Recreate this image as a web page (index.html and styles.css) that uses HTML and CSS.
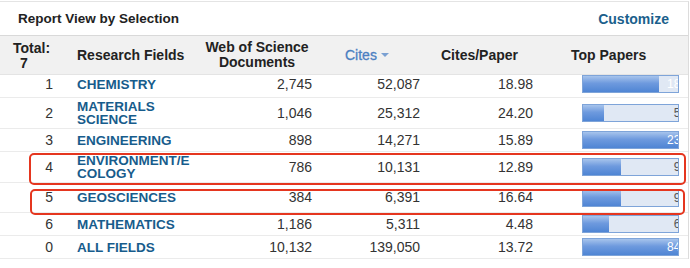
FILE: index.html
```html
<!DOCTYPE html>
<html lang="en">
<head>
  <meta charset="UTF-8" />
  <title>Report View by Selection</title>
  <link rel="stylesheet" href="styles.css">
</head>
<body>
  <div class="panel">
    <div class="panel-head">
      <span class="title">Report View by Selection</span>
      <a href="#" class="customize">Customize</a>
    </div>

    <table class="report">
      <colgroup>
        <col class="c-rank">
        <col class="c-field">
        <col class="c-docs">
        <col class="c-cites">
        <col class="c-cpp">
        <col class="c-top">
      </colgroup>
      <thead>
        <tr>
          <th class="th-total">Total:<br><span class="total-num">7</span></th>
          <th class="th-field">Research Fields</th>
          <th class="th-docs">Web of Science<br>Documents</th>
          <th class="th-cites"><span class="sorted">Cites <span class="caret"></span></span></th>
          <th class="th-cpp">Cites/Paper</th>
          <th class="th-top">Top Papers</th>
        </tr>
      </thead>
      <tbody>
        <tr class="first">
          <td class="rank">1</td>
          <td class="field"><a href="#">CHEMISTRY</a></td>
          <td class="num docs">2,745</td>
          <td class="num cites">52,087</td>
          <td class="num cpp">18.98</td>
          <td class="top"><div class="bar"><div class="fill" style="width: 80%"></div><span class="label">189</span></div></td>
        </tr>
        <tr>
          <td class="rank">2</td>
          <td class="field"><a href="#">MATERIALS<br>SCIENCE</a></td>
          <td class="num docs">1,046</td>
          <td class="num cites">25,312</td>
          <td class="num cpp">24.20</td>
          <td class="top"><div class="bar"><div class="fill" style="width: 22%"></div><span class="label dim">53</span></div></td>
        </tr>
        <tr>
          <td class="rank">3</td>
          <td class="field"><a href="#">ENGINEERING</a></td>
          <td class="num docs">898</td>
          <td class="num cites">14,271</td>
          <td class="num cpp">15.89</td>
          <td class="top"><div class="bar"><div class="fill" style="width: 100%"></div><span class="label">236</span></div></td>
        </tr>
        <tr>
          <td class="rank">4</td>
          <td class="field"><a href="#">ENVIRONMENT/E<br>COLOGY</a></td>
          <td class="num docs">786</td>
          <td class="num cites">10,131</td>
          <td class="num cpp">12.89</td>
          <td class="top"><div class="bar"><div class="fill" style="width: 40%"></div><span class="label dim">95</span></div></td>
        </tr>
        <tr class="spaced">
          <td class="rank">5</td>
          <td class="field"><a href="#">GEOSCIENCES</a></td>
          <td class="num docs">384</td>
          <td class="num cites">6,391</td>
          <td class="num cpp">16.64</td>
          <td class="top"><div class="bar"><div class="fill" style="width: 40%"></div><span class="label dim">95</span></div></td>
        </tr>
        <tr>
          <td class="rank">6</td>
          <td class="field"><a href="#">MATHEMATICS</a></td>
          <td class="num docs">1,186</td>
          <td class="num cites">5,311</td>
          <td class="num cpp">4.48</td>
          <td class="top"><div class="bar"><div class="fill" style="width: 27%"></div><span class="label dim">64</span></div></td>
        </tr>
        <tr>
          <td class="rank">0</td>
          <td class="field"><a href="#">ALL FIELDS</a></td>
          <td class="num docs">10,132</td>
          <td class="num cites">139,050</td>
          <td class="num cpp">13.72</td>
          <td class="top"><div class="bar"><div class="fill" style="width: 100%"></div><span class="label">847</span></div></td>
        </tr>
      </tbody>
    </table>

    <!-- hand-drawn highlight marks -->
    <div class="mark mark-env"></div>
    <div class="mark mark-geo"></div>
  </div>
</body>
</html>
```

FILE: styles.css
```css
body {
  margin: 0;
  font-family: 'Liberation Sans', Arial, sans-serif;
  font-size: 14px;
  color: #333;
  background: #fff;
}
.panel {
  position: relative;
  width: 688px;
  margin-top: 1px;
  border-top: 1px solid #e4e4e4;
  border-right: 1px solid #dcdcdc;
}
.panel-head {
  display: flex;
  justify-content: space-between;
  align-items: center;
  height: 33px;
  padding: 0 19px 0 18px;
  border-bottom: 1px solid #d9d9d9;
}
.title {
  font-size: 13.5px;
  font-weight: bold;
  color: #222;
}
.customize {
  font-weight: bold;
  color: #1b5f8c;
  text-decoration: none;
}
.report {
  width: 688px;
  border-collapse: collapse;
  table-layout: fixed;
}
.c-rank { width: 62px; }
.c-field { width: 128px; }
.c-docs { width: 130px; }
.c-cites { width: 105px; }
.c-cpp { width: 115px; }
.c-top { width: 148px; }

.report th {
  height: 36px;
  padding: 0;
  background: #f1f1f1;
  border-bottom: 1px solid #e4e4e4;
  font-weight: bold;
  color: #222;
  line-height: 15px;
  text-align: left;
}
.th-total { padding: 2px 0 0 13px !important; }
.total-num { padding-left: 7px; }
.th-field { padding-left: 15px !important; }
.th-docs { text-align: center !important; padding-left: 4px !important; }
.th-cites { padding-left: 25px !important; }
.th-cpp { padding-left: 16px !important; }
.th-top { padding-left: 31px !important; }
.sorted {
  color: #4b7fc1;
  font-weight: normal;
  -webkit-text-stroke: 0.3px #4b7fc1;
}
.caret {
  display: inline-block;
  width: 0;
  height: 0;
  border-left: 4px solid transparent;
  border-right: 4px solid transparent;
  border-top: 4px solid #7aa0d2;
  vertical-align: 3px;
}

.report td {
  height: 18px;
  padding: 2px 0;
  border-bottom: 1px solid #ebebeb;
  line-height: 13px;
  vertical-align: middle;
}
.report tr.first td {
  padding: 0 0 4px;
}
.report tr.spaced td {
  height: 25px;
}
.rank {
  text-align: right;
  padding-right: 9px !important;
  color: #333;
}
.field {
  padding-left: 15px !important;
}
.field a {
  font-size: 13.5px;
  color: #175c8c;
  font-weight: bold;
  text-decoration: none;
}
.num {
  text-align: right;
  color: #333;
}
.docs { padding-right: 8px !important; }
.cites { padding-right: 5px !important; }
.cpp { padding-right: 7px !important; }
.top {
  padding-left: 42px !important;
  padding-right: 9px !important;
}

.bar {
  position: relative;
  height: 16px;
  border: 1px solid #7ea4d9;
  background: #e0e8f4;
  overflow: hidden;
  text-align: right;
}
.fill {
  position: absolute;
  top: 0;
  left: 0;
  bottom: 0;
  background: linear-gradient(#a7c4ec, #6e9ade 45%, #4f85d4);
}
.label {
  position: relative;
  margin-right: -9px;
  font-size: 12px;
  line-height: 16px;
  color: #fff;
}
.label.dim {
  color: #555;
}

.mark {
  position: absolute;
  border: 2px solid #e5361f;
  border-radius: 5px;
}
.mark-env {
  left: 29px;
  top: 151px;
  width: 653px;
  height: 28px;
}
.mark-geo {
  left: 30px;
  top: 187px;
  width: 651px;
  height: 22px;
}
```
